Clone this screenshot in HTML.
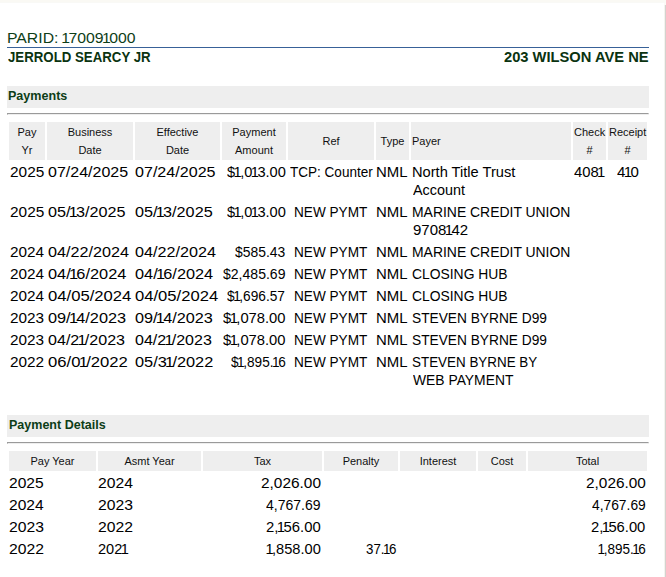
<!DOCTYPE html>
<html><head><meta charset="utf-8">
<style>
html,body{margin:0;padding:0;background:#fff;width:666px;height:577px;overflow:hidden;position:relative;}
body{font-family:"Liberation Sans",sans-serif;color:#000;}
.topband{position:absolute;left:0;top:0;width:666px;height:2px;background:#faf9f4;border-bottom:1px solid #f9f9f6;}
.rshadow{position:absolute;left:664px;top:5px;width:2px;height:572px;background:linear-gradient(to right,#f4f3ef 0,#f4f3ef 1px,#d3d2ce 1px,#d3d2ce 2px);}
.rcorner{position:absolute;left:664px;top:3px;width:2px;height:2px;background:#fbfaf6;}
.parid{position:absolute;left:8px;top:29px;font-size:15px;line-height:17px;color:#0d3d17;white-space:nowrap;transform-origin:0 0;}
.blue{position:absolute;left:7px;top:47px;width:642px;height:1px;background:#386198;}
.owner{position:absolute;left:8px;top:49px;font-size:14px;font-weight:bold;line-height:16px;color:#0a3310;white-space:nowrap;transform-origin:0 0;}
.addr{position:absolute;right:16px;top:49px;font-size:14px;font-weight:bold;line-height:16px;color:#0a3310;white-space:nowrap;letter-spacing:0.47px;}
.band{position:absolute;left:7px;width:642px;height:22px;background:#eeeeee;}
.band span{position:absolute;left:1px;top:2px;font-size:12.4px;font-weight:bold;line-height:17px;color:#0d3d17;white-space:nowrap;transform-origin:0 0;}
.hr{position:absolute;left:7px;width:640px;height:0px;border-top:1px solid #9a9a9a;border-left:1px solid #9a9a9a;border-bottom:1px solid #eeeeee;border-right:1px solid #eeeeee;}
.th{position:absolute;background:#eeeeee;padding:1px;font-size:11px;line-height:18px;color:#111;overflow:hidden;white-space:nowrap;display:flex;align-items:center;}
.th span{display:block;width:100%;}
.n1{margin:0 -1.5px;}
.t{position:absolute;font-size:14px;line-height:18px;white-space:nowrap;transform-origin:0 0;}
</style></head><body>
<div class="topband"></div>
<div class="rcorner"></div>
<div class="rshadow"></div>
<div class="parid" style="left:6.69px;transform:scaleX(1.0515)">PARID: <span class="n1">1</span>7009<span class="n1">1</span>000</div>
<div class="blue"></div>
<div class="owner" style="left:7.76px;transform:scaleX(0.9467)">JERROLD SEARCY JR</div>
<div class="owner" style="left:504.1px;transform:scaleX(1.05)">203 WILSON AVE NE</div>
<div class="band" style="top:86px"><span style="left:1.24px;transform:scaleX(1.013)">Payments</span></div>
<div class="hr" style="top:113px"></div>
<div class="band" style="top:415px"><span style="left:1.5px;transform:scaleX(1.01)">Payment Details</span></div>
<div class="hr" style="top:442px"></div>
<div class="th" style="left:9px;top:122px;width:34px;height:36px;text-align:center"><span>Pay<br>Yr</span></div>
<div class="th" style="left:47px;top:122px;width:84px;height:36px;text-align:center"><span>Business<br>Date</span></div>
<div class="th" style="left:135px;top:122px;width:83px;height:36px;text-align:center"><span>Effective<br>Date</span></div>
<div class="th" style="left:222px;top:122px;width:62px;height:36px;text-align:center"><span>Payment<br>Amount</span></div>
<div class="th" style="left:288px;top:122px;width:84px;height:36px;text-align:center"><span>Ref</span></div>
<div class="th" style="left:376px;top:122px;width:31px;height:36px;text-align:center"><span>Type</span></div>
<div class="th" style="left:411px;top:122px;width:158px;height:36px;text-align:left"><span>Payer</span></div>
<div class="th" style="left:573px;top:122px;width:31px;height:36px;text-align:center"><span>Check<br>#</span></div>
<div class="th" style="left:608px;top:122px;width:37px;height:36px;text-align:center"><span>Receipt<br>#</span></div>
<div class="th" style="left:9px;top:451px;width:85px;height:18px;text-align:center"><span>Pay Year</span></div>
<div class="th" style="left:98px;top:451px;width:101px;height:18px;text-align:center"><span>Asmt Year</span></div>
<div class="th" style="left:203px;top:451px;width:117px;height:18px;text-align:center"><span>Tax</span></div>
<div class="th" style="left:324px;top:451px;width:72px;height:18px;text-align:center"><span>Penalty</span></div>
<div class="th" style="left:400px;top:451px;width:74px;height:18px;text-align:center"><span>Interest</span></div>
<div class="th" style="left:478px;top:451px;width:46px;height:18px;text-align:center"><span>Cost</span></div>
<div class="th" style="left:528px;top:451px;width:117px;height:18px;text-align:center"><span>Total</span></div>
<div class="t" style="left:9.58px;top:163px;transform:scaleX(1.1000)">2025</div>
<div class="t" style="left:9.58px;top:203px;transform:scaleX(1.1000)">2025</div>
<div class="t" style="left:9.58px;top:243px;transform:scaleX(1.0933)">2024</div>
<div class="t" style="left:9.58px;top:265px;transform:scaleX(1.0933)">2024</div>
<div class="t" style="left:9.58px;top:287px;transform:scaleX(1.0933)">2024</div>
<div class="t" style="left:9.58px;top:309px;transform:scaleX(1.0924)">2023</div>
<div class="t" style="left:9.58px;top:331px;transform:scaleX(1.0924)">2023</div>
<div class="t" style="left:9.58px;top:353px;transform:scaleX(1.0958)">2022</div>
<div class="t" style="left:48.13px;top:163px;transform:scaleX(1.1435)">07/24/2025</div>
<div class="t" style="left:48.12px;top:203px;transform:scaleX(1.1561)">05/<span class="n1">1</span>3/2025</div>
<div class="t" style="left:48.12px;top:243px;transform:scaleX(1.1567)">04/22/2024</div>
<div class="t" style="left:48.12px;top:265px;transform:scaleX(1.1683)">04/<span class="n1">1</span>6/2024</div>
<div class="t" style="left:48.11px;top:287px;transform:scaleX(1.1899)">04/05/2024</div>
<div class="t" style="left:48.12px;top:309px;transform:scaleX(1.1636)">09/<span class="n1">1</span>4/2023</div>
<div class="t" style="left:48.13px;top:331px;transform:scaleX(1.1485)">04/2<span class="n1">1</span>/2023</div>
<div class="t" style="left:48.1px;top:353px;transform:scaleX(1.1909)">06/0<span class="n1">1</span>/2022</div>
<div class="t" style="left:135.43px;top:163px;transform:scaleX(1.1493)">07/24/2025</div>
<div class="t" style="left:135.42px;top:203px;transform:scaleX(1.1576)">05/<span class="n1">1</span>3/2025</div>
<div class="t" style="left:135.42px;top:243px;transform:scaleX(1.1552)">04/22/2024</div>
<div class="t" style="left:135.42px;top:265px;transform:scaleX(1.1653)">04/<span class="n1">1</span>6/2024</div>
<div class="t" style="left:135.41px;top:287px;transform:scaleX(1.1870)">04/05/2024</div>
<div class="t" style="left:135.42px;top:309px;transform:scaleX(1.1606)">09/<span class="n1">1</span>4/2023</div>
<div class="t" style="left:135.43px;top:331px;transform:scaleX(1.1455)">04/2<span class="n1">1</span>/2023</div>
<div class="t" style="left:135.42px;top:353px;transform:scaleX(1.1667)">05/3<span class="n1">1</span>/2022</div>
<div class="t" style="left:226.54px;top:163px;transform:scaleX(1.0450)">$<span class="n1">1</span>,0<span class="n1">1</span>3.00</div>
<div class="t" style="left:226.54px;top:203px;transform:scaleX(1.0450)">$<span class="n1">1</span>,0<span class="n1">1</span>3.00</div>
<div class="t" style="left:235.15px;top:243px;transform:scaleX(0.9930)">$585.43</div>
<div class="t" style="left:222.85px;top:265px;transform:scaleX(1.0033)">$2,485.69</div>
<div class="t" style="left:227.36px;top:287px;transform:scaleX(0.9778)">$<span class="n1">1</span>,696.57</div>
<div class="t" style="left:222.84px;top:309px;transform:scaleX(1.0547)">$<span class="n1">1</span>,078.00</div>
<div class="t" style="left:222.84px;top:331px;transform:scaleX(1.0547)">$<span class="n1">1</span>,078.00</div>
<div class="t" style="left:230.66px;top:353px;transform:scaleX(0.9712)">$<span class="n1">1</span>,895.<span class="n1">1</span>6</div>
<div class="t" style="left:289.86px;top:163px;transform:scaleX(0.9666)">TCP: Counter</div>
<div class="t" style="left:294.13px;top:203px;transform:scaleX(0.9710)">NEW PYMT</div>
<div class="t" style="left:294.13px;top:243px;transform:scaleX(0.9710)">NEW PYMT</div>
<div class="t" style="left:294.13px;top:265px;transform:scaleX(0.9710)">NEW PYMT</div>
<div class="t" style="left:294.13px;top:287px;transform:scaleX(0.9710)">NEW PYMT</div>
<div class="t" style="left:294.13px;top:309px;transform:scaleX(0.9710)">NEW PYMT</div>
<div class="t" style="left:294.13px;top:331px;transform:scaleX(0.9710)">NEW PYMT</div>
<div class="t" style="left:294.13px;top:353px;transform:scaleX(0.9710)">NEW PYMT</div>
<div class="t" style="left:376.03px;top:163px;transform:scaleX(1.0655)">NML</div>
<div class="t" style="left:376.03px;top:203px;transform:scaleX(1.0655)">NML</div>
<div class="t" style="left:376.03px;top:243px;transform:scaleX(1.0655)">NML</div>
<div class="t" style="left:376.03px;top:265px;transform:scaleX(1.0655)">NML</div>
<div class="t" style="left:376.03px;top:287px;transform:scaleX(1.0655)">NML</div>
<div class="t" style="left:376.03px;top:309px;transform:scaleX(1.0655)">NML</div>
<div class="t" style="left:376.03px;top:331px;transform:scaleX(1.0655)">NML</div>
<div class="t" style="left:376.03px;top:353px;transform:scaleX(1.0655)">NML</div>
<div class="t" style="left:412.05px;top:163px;transform:scaleX(1.0455)">North Title Trust</div>
<div class="t" style="left:413.1px;top:181px;transform:scaleX(1.0277)">Account</div>
<div class="t" style="left:412.11px;top:203px;transform:scaleX(0.9949)">MARINE CREDIT UNION</div>
<div class="t" style="left:412.56px;top:221px;transform:scaleX(1.0713)">9708<span class="n1">1</span>42</div>
<div class="t" style="left:412.11px;top:243px;transform:scaleX(0.9949)">MARINE CREDIT UNION</div>
<div class="t" style="left:412.36px;top:265px;transform:scaleX(0.9905)">CLOSING HUB</div>
<div class="t" style="left:412.36px;top:287px;transform:scaleX(0.9905)">CLOSING HUB</div>
<div class="t" style="left:412.36px;top:309px;transform:scaleX(0.9802)">STEVEN BYRNE D99</div>
<div class="t" style="left:412.36px;top:331px;transform:scaleX(0.9802)">STEVEN BYRNE D99</div>
<div class="t" style="left:412.38px;top:353px;transform:scaleX(0.9580)">STEVEN BYRNE BY</div>
<div class="t" style="left:413.1px;top:371px;transform:scaleX(0.9901)">WEB PAYMENT</div>
<div class="t" style="left:574.34px;top:163px;transform:scaleX(1.0574)">408<span class="n1">1</span></div>
<div class="t" style="left:616.53px;top:163px;transform:scaleX(1.0734)">4<span class="n1">1</span>0</div>
<div class="t" style="left:9.27px;top:474px;transform:scaleX(1.1133)">2025</div>
<div class="t" style="left:9.27px;top:496px;transform:scaleX(1.1133)">2024</div>
<div class="t" style="left:9.26px;top:518px;transform:scaleX(1.1227)">2023</div>
<div class="t" style="left:9.26px;top:540px;transform:scaleX(1.1227)">2022</div>
<div class="t" style="left:97.96px;top:474px;transform:scaleX(1.1200)">2024</div>
<div class="t" style="left:97.96px;top:496px;transform:scaleX(1.1227)">2023</div>
<div class="t" style="left:97.96px;top:518px;transform:scaleX(1.1227)">2022</div>
<div class="t" style="left:98.02px;top:540px;transform:scaleX(1.0407)">202<span class="n1">1</span></div>
<div class="t" style="left:260.67px;top:474px;transform:scaleX(1.1005)">2,026.00</div>
<div class="t" style="left:266.05px;top:496px;transform:scaleX(1.0009)">4,767.69</div>
<div class="t" style="left:266px;top:518px;transform:scaleX(1.0607)">2,<span class="n1">1</span>56.00</div>
<div class="t" style="left:266.82px;top:540px;transform:scaleX(1.0447)"><span class="n1">1</span>,858.00</div>
<div class="t" style="left:366.02px;top:540px;transform:scaleX(0.9516)">37.<span class="n1">1</span>6</div>
<div class="t" style="left:585.68px;top:474px;transform:scaleX(1.0986)">2,026.00</div>
<div class="t" style="left:591.75px;top:496px;transform:scaleX(0.9860)">4,767.69</div>
<div class="t" style="left:591.21px;top:518px;transform:scaleX(1.0547)">2,<span class="n1">1</span>56.00</div>
<div class="t" style="left:598.68px;top:540px;transform:scaleX(0.9649)"><span class="n1">1</span>,895.<span class="n1">1</span>6</div>
</body></html>
